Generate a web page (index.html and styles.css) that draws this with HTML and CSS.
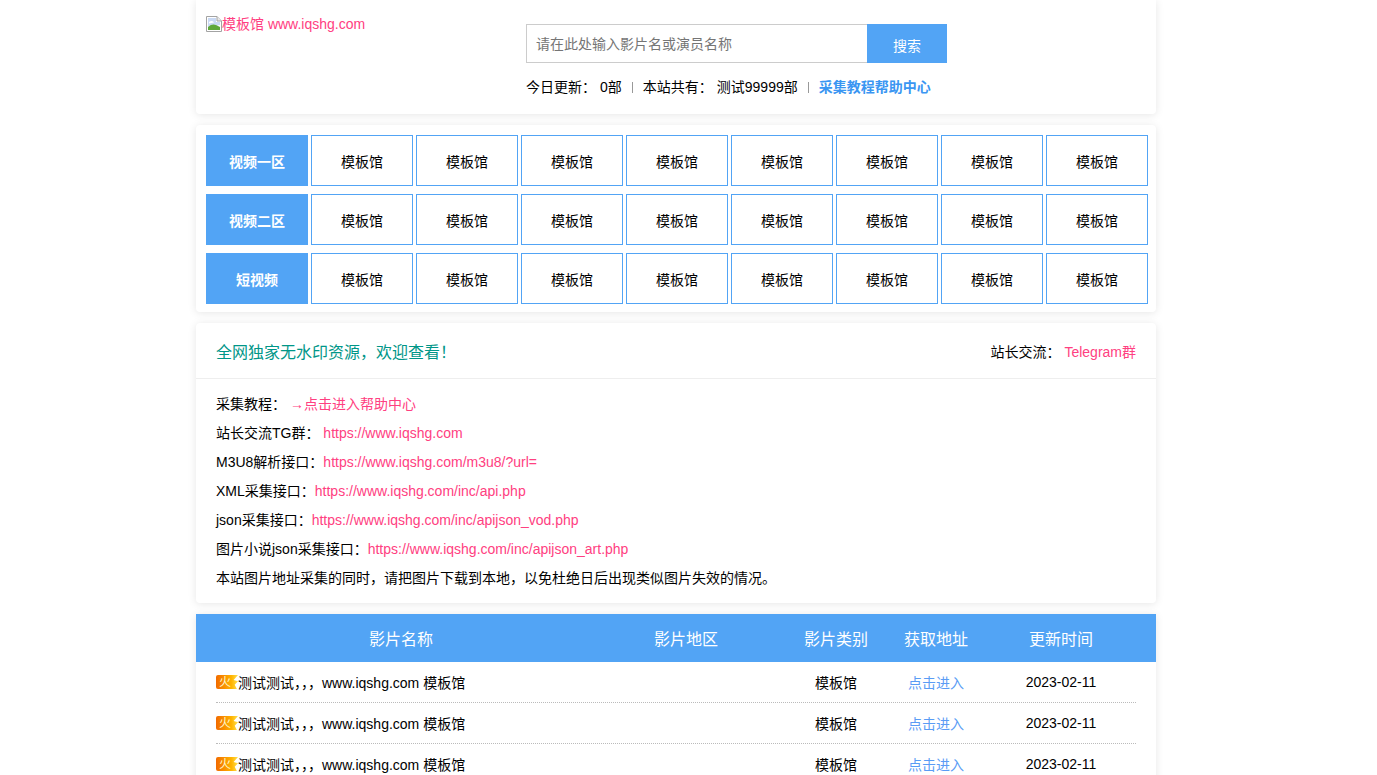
FILE: index.html
```html
<!DOCTYPE html>
<html lang="zh-CN">
  <head>
    <meta charset="UTF-8" />
    <title>模板馆 www.iqshg.com</title>
    <link rel="stylesheet" href="styles.css">
  </head>
  <body>
    <div class="wrap">
      <!-- 顶部 -->
      <header class="card head">
        <a class="logo" href="#">
          <svg class="broken-img" width="16" height="16" viewBox="0 0 16 16">
            <path d="M.5.5H11L15.500 5V15.500H.5Z" fill="#fff" stroke="#a3a3a3" />
            <path d="M11 .5V5H15.500" fill="#e8e8e8" stroke="#a3a3a3" />
            <path d="M2 2H10V6H14V9L2 11Z" fill="#c9d9f4" />
            <path d="M2 11C5 8 8 8 10 9L14 11V14H2Z" fill="#5fa83a" />
            <path d="M3 6C5 4.500 7 5 8 6.500L3 7.500Z" fill="#fff" />
          </svg>模板馆 www.iqshg.com</a>
        <div class="head-right">
          <form class="search">
            <input class="search-input" type="text" placeholder="请在此处输入影片名或演员名称" />
            <button class="search-btn" type="button">搜索</button>
          </form>
          <p class="stats">
            <span>今日更新：</span><span>0部</span><i class="sep"></i><span>本站共有：</span><span>测试99999部</span><i class="sep"></i><a class="help" href="#">采集教程帮助中心</a>
          </p>
        </div>
      </header>

      <!-- 分类导航 -->
      <nav class="card nav">
        <a class="nav-title" href="#">视频一区</a>
        <a class="nav-item" href="#">模板馆</a><a class="nav-item" href="#">模板馆</a><a class="nav-item" href="#">模板馆</a><a class="nav-item" href="#">模板馆</a>
        <a class="nav-item" href="#">模板馆</a><a class="nav-item" href="#">模板馆</a><a class="nav-item" href="#">模板馆</a><a class="nav-item" href="#">模板馆</a>
        <a class="nav-title" href="#">视频二区</a>
        <a class="nav-item" href="#">模板馆</a><a class="nav-item" href="#">模板馆</a><a class="nav-item" href="#">模板馆</a><a class="nav-item" href="#">模板馆</a>
        <a class="nav-item" href="#">模板馆</a><a class="nav-item" href="#">模板馆</a><a class="nav-item" href="#">模板馆</a><a class="nav-item" href="#">模板馆</a>
        <a class="nav-title" href="#">短视频</a>
        <a class="nav-item" href="#">模板馆</a><a class="nav-item" href="#">模板馆</a><a class="nav-item" href="#">模板馆</a><a class="nav-item" href="#">模板馆</a>
        <a class="nav-item" href="#">模板馆</a><a class="nav-item" href="#">模板馆</a><a class="nav-item" href="#">模板馆</a><a class="nav-item" href="#">模板馆</a>
      </nav>

      <!-- 公告 -->
      <section class="card notice">
        <div class="notice-head">
          <h2 class="notice-title">全网独家无水印资源，欢迎查看！</h2>
          <p>站长交流： <a href="#">Telegram群</a></p>
        </div>
        <div class="notice-body">
          <p>采集教程： <a href="#">→点击进入帮助中心</a></p>
          <p>站长交流TG群： <a href="#">https://www.iqshg.com</a></p>
          <p>M3U8解析接口：<a href="#">https://www.iqshg.com/m3u8/?url=</a></p>
          <p>XML采集接口：<a href="#">https://www.iqshg.com/inc/api.php</a></p>
          <p>json采集接口：<a href="#">https://www.iqshg.com/inc/apijson_vod.php</a></p>
          <p>图片小说json采集接口：<a href="#">https://www.iqshg.com/inc/apijson_art.php</a></p>
          <p>本站图片地址采集的同时，请把图片下载到本地，以免杜绝日后出现类似图片失效的情况。</p>
        </div>
      </section>

      <!-- 影片列表 -->
      <section class="card list">
        <div class="list-head">
          <span>影片名称</span><span>影片地区</span><span>影片类别</span><span>获取地址</span><span>更新时间</span>
        </div>
        <ul class="list-rows">
          <li class="row">
            <span class="row-name"><i class="hot">火</i>测试测试，，，www.iqshg.com 模板馆</span><span></span><span>模板馆</span><a href="#">点击进入</a><span>2023-02-11</span>
          </li>
          <li class="row">
            <span class="row-name"><i class="hot">火</i>测试测试，，，www.iqshg.com 模板馆</span><span></span><span>模板馆</span><a href="#">点击进入</a><span>2023-02-11</span>
          </li>
          <li class="row">
            <span class="row-name"><i class="hot">火</i>测试测试，，，www.iqshg.com 模板馆</span><span></span><span>模板馆</span><a href="#">点击进入</a><span>2023-02-11</span>
          </li>
        </ul>
      </section>
    </div>
  </body>
</html>
```
FILE: styles.css
```css
* {
  margin: 0;
  padding: 0;
  box-sizing: border-box;
}
html,
body {
  height: 100%;
  overflow: hidden;
}
body {
  padding-right: 25px;
  background: #fff;
  color: #000;
  font-family: "Liberation Sans", "Noto Sans CJK SC", sans-serif;
  font-size: 14px;
}
a {
  color: #ff4081;
  text-decoration: none;
}
.wrap {
  width: 960px;
  margin: 0 auto;
  display: flex;
  flex-direction: column;
  gap: 11px;
}
.card {
  background: #fff;
  border-radius: 0 0 4px 4px;
  box-shadow: 0 1px 8px rgba(0, 0, 0, 0.1);
}

/* 顶部 */
.head {
  height: 114px;
  padding: 16px 0 0 10px;
  display: flex;
}
.logo {
  width: 320px;
  height: 16px;
  line-height: 16px;
  display: flex;
  align-items: flex-start;
}
.broken-img {
  flex: none;
}
.head-right {
  padding-top: 8px;
}
.search {
  display: flex;
  width: 421px;
  height: 39px;
}
.search-input {
  width: 341px;
  padding: 0 9px;
  border: 1px solid #ccc;
  border-right: none;
  outline: none;
  font: inherit;
}
.search-input::placeholder {
  color: #757575;
}
.search-btn {
  width: 80px;
  border: none;
  background: #52a4f5;
  color: #fff;
  font: inherit;
  padding-top: 2px;
}
.stats {
  margin-top: 14px;
  line-height: 20px;
  display: flex;
  align-items: center;
}
.stats span + span {
  margin-left: 4px;
}
.sep {
  width: 1px;
  height: 11px;
  margin: 0 10px;
  background: #999;
}
.help {
  color: #3a96f2;
  font-weight: bold;
}

/* 分类导航 */
.nav {
  height: 187px;
  padding: 10px 8px 8px 10px;
  display: grid;
  grid-template-columns: repeat(9, 102px);
  grid-auto-rows: 51px;
  column-gap: 3px;
  row-gap: 8px;
  border-radius: 4px;
}
.nav-title,
.nav-item {
  display: flex;
  align-items: center;
  justify-content: center;
}
.nav-title {
  background: #52a4f5;
  color: #fff;
  font-weight: bold;
}
.nav-item {
  border: 1px solid #52a4f5;
  color: #000;
}

/* 公告 */
.notice {
  height: 280px;
  border-radius: 4px;
}
.notice-head {
  height: 56px;
  padding: 0 20px;
  border-bottom: 1px solid #eee;
  display: flex;
  align-items: center;
  justify-content: space-between;
}
.notice-title {
  color: #009688;
  font-size: 16px;
  font-weight: normal;
}
.notice-body {
  padding: 11px 20px 0;
  line-height: 29px;
}

/* 影片列表 */
.list {
  border-radius: 0;
}
.list-head,
.row {
  display: grid;
  grid-template-columns: 370px 200px 100px 100px 150px;
  text-align: center;
}
.list-head {
  height: 48px;
  padding: 0 20px;
  align-items: center;
  background: #52a4f5;
  color: #fff;
  font-size: 16px;
}
.list-rows {
  list-style: none;
  padding: 0 20px;
}
.row {
  height: 41px;
  align-items: center;
  border-bottom: 1px dotted #bbb;
}
.row a {
  color: #5a9cf5;
}
.row-name {
  display: flex;
  align-items: center;
  text-align: left;
}
.hot {
  width: 22px;
  height: 14px;
  flex: none;
  border-radius: 2px 0 0 2px;
  background: linear-gradient(90deg, #f26a00, #ffb300 70%, #ffe14d);
  clip-path: polygon(0 0, 100% 0, 80% 35%, 100% 45%, 85% 70%, 95% 100%, 0 100%);
  color: #fff6c9;
  font-size: 12px;
  font-style: normal;
  line-height: 14px;
  padding-left: 3px;
}
```
